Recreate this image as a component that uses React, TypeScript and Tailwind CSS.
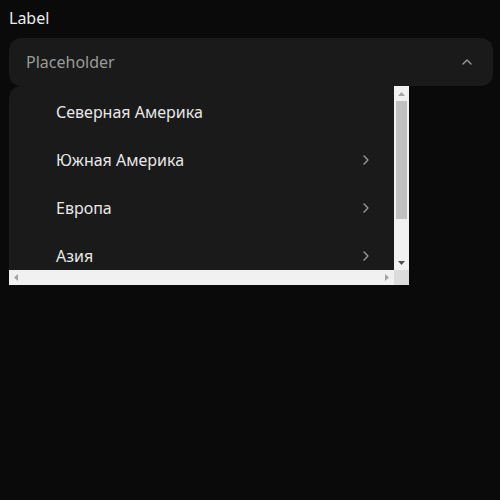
import React from "react";
import { ChevronUp, ChevronRight } from "lucide-react";

const regions = [
  { name: "Северная Америка", sub: false },
  { name: "Южная Америка", sub: true },
  { name: "Европа", sub: true },
  { name: "Азия", sub: true },
];

function Arrow({ dir, color }: { dir: "up" | "down" | "left" | "right"; color: string }) {
  const pts = {
    up: "0,4 3.5,0 7,4",
    down: "0,0 7,0 3.5,4",
    left: "4,0 4,7 0,3.5",
    right: "0,0 0,7 4,3.5",
  }[dir];
  const horiz = dir === "left" || dir === "right";
  return (
    <svg
      width={horiz ? 4 : 7}
      height={horiz ? 7 : 4}
      viewBox={horiz ? "0 0 4 7" : "0 0 7 4"}
      className="block"
    >
      <polygon points={pts} fill={color} />
    </svg>
  );
}

export default function App() {
  return (
    <main
      className="w-[500px] h-[500px] bg-[#0a0a0a] text-[#ececec] pt-[8px]"
      style={{ fontFamily: '"Noto Sans", "Open Sans", sans-serif' }}
    >
      {/* Label */}
      <div className="ml-[9px] text-[16px] leading-[20px] h-[30px]">Label</div>

      {/* Select trigger */}
      <div className="ml-[9px] w-[484px] h-[48px] rounded-[12px] bg-[#1a1a1a] flex items-center justify-between pl-[17px] pr-[18px]">
        <span className="text-[16px] text-[#9a9a9a]">Placeholder</span>
        <ChevronUp className="w-4 h-4 text-[#9a9a9a]" strokeWidth={2} />
      </div>

      {/* Dropdown list with classic scrollbars */}
      <div className="ml-[9px] w-[400px] h-[199px] flex flex-col bg-[#1a1a1a] rounded-tl-[12px] overflow-hidden">
        <div className="flex h-[184px]">
          <ul className="flex-1 h-full overflow-hidden pt-[2px]">
            {regions.map((r) => (
              <li
                key={r.name}
                className="h-[48px] flex items-center justify-between pl-[47px] pr-[20px] text-[16px] text-[#e8e8e8]"
              >
                <span>{r.name}</span>
                {r.sub && <ChevronRight className="w-4 h-4 text-[#9a9a9a]" strokeWidth={2} />}
              </li>
            ))}
          </ul>
          {/* vertical scrollbar */}
          <div className="w-[15px] h-full bg-[#f1f1f1] flex flex-col">
            <div className="h-[15px] flex items-center justify-center">
              <Arrow dir="up" color="#a3a3a3" />
            </div>
            <div className="flex-1 px-[2px]">
              <div className="h-[118px] bg-[#c1c1c1]" />
            </div>
            <div className="h-[15px] flex items-center justify-center">
              <Arrow dir="down" color="#505050" />
            </div>
          </div>
        </div>
        {/* horizontal scrollbar */}
        <div className="flex h-[15px]">
          <div className="flex-1 bg-[#f1f1f1] flex items-center justify-between px-[5px]">
            <Arrow dir="left" color="#a3a3a3" />
            <Arrow dir="right" color="#a3a3a3" />
          </div>
          <div className="w-[15px] bg-[#dcdcdc]" />
        </div>
      </div>
    </main>
  );
}
